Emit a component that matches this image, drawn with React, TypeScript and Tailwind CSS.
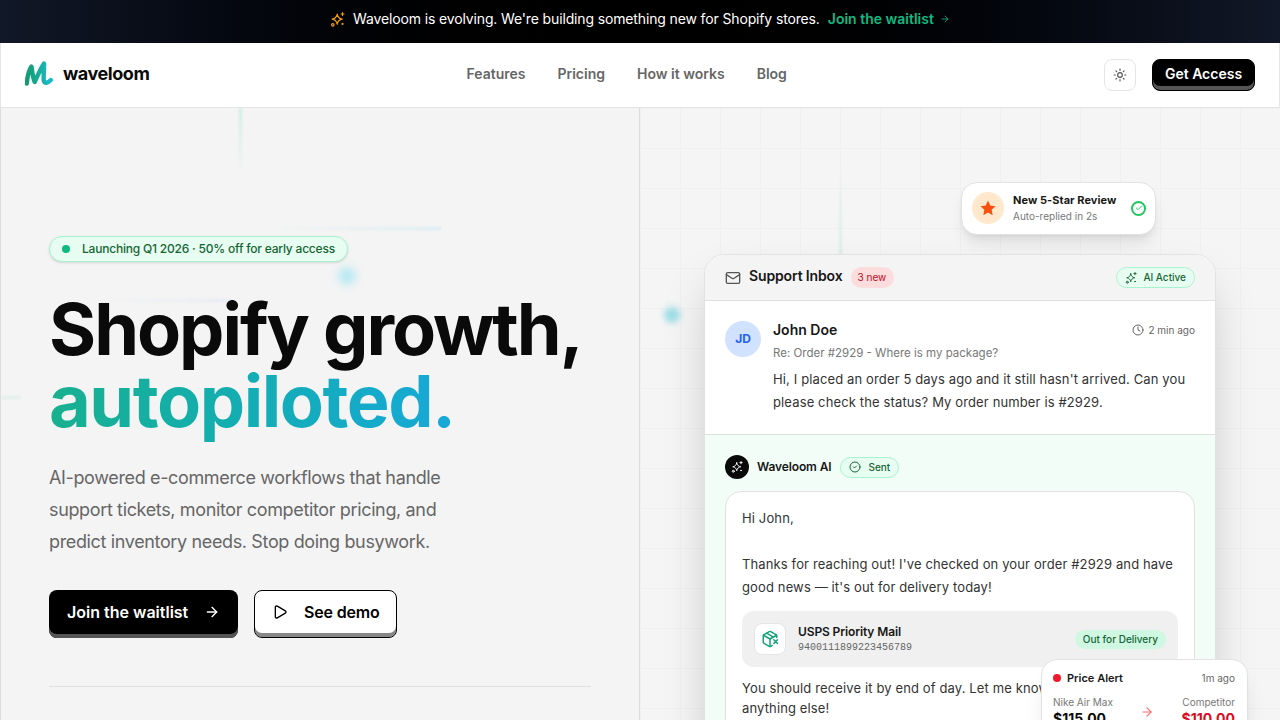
import { ArrowRight, Check, CircleCheck, Clock, Mail, PackageX, Play, Sun } from "lucide-react";

function Sparkle({ className }: { className?: string }) {
  return (
    <svg viewBox="0 0 24 24" fill="none" stroke="currentColor" strokeWidth="1.900" strokeLinecap="round" strokeLinejoin="round" className={className}>
      <path d="M11.500 3.500c.8 4.800 3.300 7.300 8 8-4.700.8-7.200 3.300-8 8-.8-4.700-3.300-7.200-8-8 4.700-.7 7.200-3.200 8-8z" />
      <path d="M20 1v4.500M17.800 3.200h4.500" />
      <circle cx="4.500" cy="20.500" r="2" />
      <circle cx="20" cy="19" r="0.800" />
    </svg>
  );
}

function Logo() {
  return (
    <svg viewBox="2 0 30 26" className="h-[26px] w-[30px]" fill="none">
      <defs>
        <linearGradient id="wl" x1="3" y1="0" x2="28" y2="0" gradientUnits="userSpaceOnUse">
          <stop offset="0" stopColor="#149a6c" />
          <stop offset="1" stopColor="#1cbccb" />
        </linearGradient>
      </defs>
      <path
        d="M3.800 22.500C4.300 16 6 9.500 8.500 5.500c.8 5 1.200 10.500 3.200 15.500 2.500-5.500 5.500-12.500 9.300-18.500.4 5.500-.8 12.500-.2 17 .4 3.600 4.200 2.500 7-.5"
        stroke="url(#wl)"
        strokeWidth="4.400"
        strokeLinecap="round"
        strokeLinejoin="round"
      />
    </svg>
  );
}

export default function App() {
  return (
    <div className="flex h-[720px] flex-col overflow-hidden bg-white font-['Inter',sans-serif] text-[#0a0a0a]">
      <div className="flex h-[43px] shrink-0 items-center justify-center bg-gradient-to-r from-[#111827] via-[#000000] to-[#111827] pb-[5px] text-sm text-white">
        <Sparkle className="mr-2 h-[15px] w-[15px] text-[#f59e0b]" />
        <span className="tracking-[-0.01em]">Waveloom is evolving. We're building something new for Shopify stores.</span>
        <span className="ml-2 flex items-center gap-[6px] font-semibold text-[#10b981]">
          Join the waitlist
          <ArrowRight className="h-[10px] w-[10px]" strokeWidth={2} />
        </span>
      </div>

      <nav className="flex h-[65px] shrink-0 items-center justify-between border-x border-b border-[#e5e5e5] bg-white px-6 pb-[2px]">
        <div className="flex items-center gap-2">
          <Logo />
          <span className="text-lg font-bold tracking-tight text-[#0a0a0a]">waveloom</span>
        </div>
        <div className="flex items-center gap-8 text-sm font-semibold text-[#666666]">
          <span>Features</span>
          <span>Pricing</span>
          <span>How it works</span>
          <span>Blog</span>
        </div>
        <div className="mt-[2px] flex items-center gap-4">
          <div className="flex h-8 w-8 items-center justify-center rounded-lg border border-[#e5e5e5] bg-white">
            <Sun className="h-[14px] w-[14px] text-[#555555]" />
          </div>
          <div className="flex h-8 w-[103px] items-start justify-center rounded-lg border border-black bg-black pt-[4px] text-sm font-semibold text-white shadow-[inset_0_-4px_0_#555555]">
            Get Access
          </div>
        </div>
      </nav>

      <main className="grid min-h-0 flex-1 grid-cols-2 overflow-hidden">
        <section className="relative flex flex-col overflow-hidden border-x border-[#dddddd] bg-[#f4f4f4] px-12 pt-[128px]">
          <div className="absolute top-0 left-[238px] h-[64px] w-[3px] bg-gradient-to-b from-[#cdeee6] to-transparent blur-[1px]" />
          <div className="absolute top-[119px] left-[270px] h-[3px] w-[170px] bg-gradient-to-r from-transparent to-[#dcedf3] blur-[1px]" />
          <div className="absolute top-[159px] left-[337px] h-[18px] w-[18px] rounded-full bg-[#b8e9f2] blur-[4px]" />
          <div className="absolute top-[191px] left-[100px] h-[3px] w-[130px] bg-gradient-to-r from-transparent to-[#e6ebf5] blur-[1px]" />
          <div className="absolute top-[288px] left-0 h-[3px] w-[20px] bg-[#e2eeec] blur-[1px]" />
          <div className="relative flex h-[26px] w-[299px] items-center gap-3 rounded-full border border-[#a7f3d0] bg-[#e8fdf2] pl-3 text-xs font-medium tracking-[-0.017em] text-[#166534] shadow-sm">
            <span className="h-2 w-2 rounded-full bg-[#10b981]" />
            <span>Launching Q1 2026 · 50% off for early access</span>
          </div>
          <h1 className="relative mt-[31px] text-[72px] leading-[72px] font-bold text-[#0a0a0a]">
            <span className="block tracking-[-0.028em]">Shopify growth,</span>
            <span className="block w-fit bg-gradient-to-r from-[#19b08f] to-[#18a8d8] bg-clip-text pb-2 tracking-[-0.02em] text-transparent">autopiloted.</span>
          </h1>
          <p className="relative mt-[17px] w-[440px] text-lg leading-8 tracking-[-0.02em] text-[#666666]">
            AI-powered e-commerce workflows that handle support tickets, monitor competitor pricing, and predict inventory needs. Stop doing busywork.
          </p>
          <div className="relative mt-8 flex gap-4">
            <div className="flex h-12 w-[189px] items-center justify-between rounded-lg bg-black pr-[18px] pb-1 pl-[18px] text-base font-semibold text-white shadow-[inset_0_-4px_0_#555555]">
              Join the waitlist
              <ArrowRight className="h-4 w-4" />
            </div>
            <div className="flex h-12 w-[143px] items-center gap-4 rounded-lg border border-black bg-white pb-1 pl-[17px] text-base font-semibold tracking-[-0.01em] text-black shadow-[inset_0_-4px_0_#888888]">
              <Play className="h-4 w-4" />
              See demo
            </div>
          </div>
          <div className="relative mt-[48px] h-px bg-[#e0e0e0]" />
        </section>

        <section className="relative overflow-hidden bg-[#f5f5f5] bg-[linear-gradient(#f0f0f0_1px,transparent_1px),linear-gradient(90deg,#f0f0f0_1px,transparent_1px)] bg-[size:40px_40px] px-16 pt-[146px]">
          <div className="absolute top-[60px] left-[199px] h-[90px] w-[3px] bg-gradient-to-b from-transparent to-[#d5efe5] blur-[1px]" />
          <div className="absolute top-[199px] left-[24px] h-4 w-4 rounded-full bg-[#9fdde6] blur-[3px]" />

          <div className="relative w-[512px] overflow-hidden rounded-[20px] border border-[#e2e2e2] bg-white shadow-[0_25px_50px_-12px_rgba(0,0,0,0.25)]">
            <div className="flex h-[46px] items-center justify-between border-b border-[#e0e0e0] bg-[#f4f4f4] pr-5 pl-5">
              <div className="flex items-center gap-2">
                <Mail className="h-4 w-4 text-[#555555]" />
                <span className="pb-[3px] text-sm font-semibold tracking-[-0.01em] text-[#171717]">Support Inbox</span>
                <span className="rounded-full bg-[#fcdcdc] py-[3px] pr-2 pl-[7px] text-[10px] leading-[15px] text-[#c10b1f]">3 new</span>
              </div>
              <div className="flex items-center gap-[6px] rounded-full border border-[#a7f3d0] bg-[#e8fdf2] px-2 py-[3px] text-[10px] leading-[13px] font-medium text-[#166534]">
                <Sparkle className="h-3 w-3" />
                AI Active
              </div>
            </div>

            <div className="flex h-[134px] gap-3 border-b border-[#e0e0e0] bg-white px-5 pt-5">
              <div className="flex h-9 w-9 shrink-0 items-center justify-center rounded-full bg-[#d1e2fe] text-xs font-bold text-[#2563eb]">JD</div>
              <div className="min-w-0 flex-1">
                <div className="flex items-center justify-between">
                  <span className="text-sm leading-[18px] font-semibold text-[#171717]">John Doe</span>
                  <span className="flex items-center gap-1 text-[10px] text-[#666666]">
                    <Clock className="h-3 w-3" />2 min ago
                  </span>
                </div>
                <div className="mt-[6px] text-[11.500px] leading-4 text-[#777777]">Re: Order #2929 - Where is my package?</div>
                <p className="mt-[7px] text-[13px] leading-[23px] tracking-[0.01em] text-[#333333]">
                  Hi, I placed an order 5 days ago and it still hasn't arrived. Can you please check the status? My order number is #2929.
                </p>
              </div>
            </div>

            <div className="h-[400px] bg-[#f2fdf7] px-5 pt-5">
              <div className="flex items-center gap-2">
                <div className="flex h-6 w-6 items-center justify-center rounded-full bg-[#0a0a0a] text-white">
                  <Sparkle className="h-3 w-3" />
                </div>
                <span className="text-xs font-semibold tracking-[-0.01em] text-[#171717]">Waveloom AI</span>
                <span className="flex items-center gap-2 rounded-full border border-[#a7f3d0] bg-[#e8fdf2] px-2 py-[3px] text-[10px] leading-[13px] font-medium text-[#166534]">
                  <CircleCheck className="h-3 w-3" />
                  Sent
                </span>
              </div>
              <div className="mt-3 rounded-2xl border border-[#e0e0e0] bg-white px-4 pt-[15px] pb-4 text-[13px] leading-[23px] tracking-[0.01em] text-[#333333]">
                <p>Hi John,</p>
                <p className="mt-[23px]">Thanks for reaching out! I've checked on your order #2929 and have good news — it's out for delivery today!</p>
                <div className="mt-3 flex h-14 items-center gap-3 rounded-xl bg-[#f0f0f0] pr-3 pl-3 tracking-normal">
                  <div className="flex h-8 w-8 items-center justify-center rounded-lg border border-[#e5e5e5] bg-white">
                    <PackageX className="h-[18px] w-[18px] text-[#16a37a]" />
                  </div>
                  <div className="flex-1 pt-[2px]">
                    <div className="text-xs leading-4 font-semibold tracking-[-0.01em] text-[#171717]">USPS Priority Mail</div>
                    <div className="font-['Liberation_Mono',monospace] text-[10px] leading-[16px] text-[#666666]">9400111899223456789</div>
                  </div>
                  <span className="rounded-full bg-[#d0f7e2] px-2 py-[3px] text-[10px] leading-[13px] font-medium text-[#166534]">Out for Delivery</span>
                </div>
                <p className="mt-[11px] leading-5">You should receive it by end of day. Let me know if you need anything else!</p>
              </div>
            </div>
          </div>

          <div className="absolute top-[74px] left-[321px] flex h-[53px] w-[195px] items-center gap-[9px] rounded-2xl border border-[#e2e2e2] bg-white pb-[1px] pl-[10px] shadow-lg">
            <div className="flex h-8 w-8 items-center justify-center rounded-full bg-[#ffe8cc]">
              <svg viewBox="0 0 24 24" className="h-[18px] w-[18px] text-[#f9500f]" fill="currentColor">
                <path d="M12 2l3 6.600 7 .9-5.100 4.800 1.300 7.200L12 17.900 5.800 21.500l1.300-7.200L2 9.500l7-.9z" />
              </svg>
            </div>
            <div className="-mt-[2px] w-[109px]">
              <div className="text-[11px] leading-[14px] font-bold tracking-[0.005em] text-[#171717]">New 5-Star Review</div>
              <div className="mt-[3px] text-[10px] leading-3 text-[#777777]">Auto-replied in 2s</div>
            </div>
            <div className="flex h-[15px] w-[15px] items-center justify-center rounded-full border-2 border-[#22c55e] text-[#22c55e]">
              <Check className="h-2 w-2" strokeWidth={3} />
            </div>
          </div>

          <div className="absolute top-[551px] left-[401px] h-[160px] w-[207px] rounded-2xl border border-[#e2e2e2] bg-white px-[11px] pt-[10px] shadow-xl">
            <div className="flex items-center justify-between">
              <div className="flex items-center gap-[6px]">
                <span className="h-2 w-2 rounded-full bg-[#f5182c]" />
                <span className="text-[11px] font-semibold text-[#171717]">Price Alert</span>
              </div>
              <span className="pr-[1px] text-[10px] text-[#666666]">1m ago</span>
            </div>
            <div className="mt-[8px] flex items-center justify-between pr-[1px]">
              <div>
                <div className="text-[10px] leading-[14px] text-[#777777]">Nike Air Max</div>
                <div className="text-sm leading-[20px] font-bold text-[#0a0a0a]">$115.00</div>
              </div>
              <ArrowRight className="h-[14px] w-[14px] text-[#f87171]" />
              <div className="text-right">
                <div className="text-[10px] leading-[14px] text-[#777777]">Competitor</div>
                <div className="text-sm leading-[20px] font-bold text-[#dc0a1e]">$110.00</div>
              </div>
            </div>
          </div>
        </section>
      </main>
    </div>
  );
}
